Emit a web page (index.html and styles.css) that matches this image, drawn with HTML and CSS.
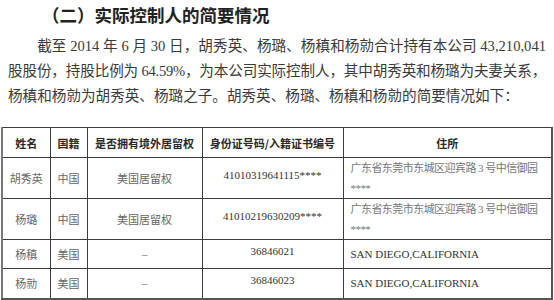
FILE: index.html
```html
<!DOCTYPE html>
<html lang="zh-CN">
<head>
<meta charset="utf-8">
<link rel="stylesheet" href="styles.css">
</head>
<body>
<div class="page">
  <h2 class="title">（二）实际控制人的简要情况</h2>
  <div class="para">
    <div class="line first">截至 2014 年 6 月 30 日，胡秀英、杨璐、杨稹和杨勍合计持有本公司 43,210,041</div>
    <div class="line tight">股股份，持股比例为 64.59%，为本公司实际控制人，其中胡秀英和杨璐为夫妻关系，</div>
    <div class="line last">杨稹和杨勍为胡秀英、杨璐之子。胡秀英、杨璐、杨稹和杨勍的简要情况如下：</div>
  </div>
  <table class="info">
    <colgroup>
      <col class="c1"><col class="c2"><col class="c3"><col class="c4"><col class="c5">
    </colgroup>
    <thead>
      <tr class="r-head">
        <th>姓名</th><th>国籍</th><th>是否拥有境外居留权</th><th>身份证号码/入籍证书编号</th><th>住所</th>
      </tr>
    </thead>
    <tbody>
      <tr class="r-tall">
        <td class="muted">胡秀英</td><td class="muted">中国</td><td class="muted">美国居留权</td>
        <td class="id">41010319641115****</td>
        <td class="addr">广东省东莞市东城区迎宾路 3 号中信御园<br>****</td>
      </tr>
      <tr class="r-tall2">
        <td class="muted">杨璐</td><td class="muted">中国</td><td class="muted">美国居留权</td>
        <td class="id">41010219630209****</td>
        <td class="addr">广东省东莞市东城区迎宾路 3 号中信御园<br>****</td>
      </tr>
      <tr class="r-short">
        <td class="muted">杨稹</td><td class="muted">美国</td><td class="muted">–</td>
        <td class="id">36846021</td>
        <td class="addr en">SAN DIEGO,CALIFORNIA</td>
      </tr>
      <tr class="r-short2">
        <td class="muted">杨勍</td><td class="muted">美国</td><td class="muted">–</td>
        <td class="id">36846023</td>
        <td class="addr en">SAN DIEGO,CALIFORNIA</td>
      </tr>
    </tbody>
  </table>
</div>
</body>
</html>
```

FILE: styles.css
```css
html, body {
  margin: 0;
  padding: 0;
  background: #ffffff;
}

.page {
  width: 554px;
  height: 300px;
  overflow: hidden;
}

.title {
  margin: 0;
  padding-left: 42px;
  height: 30px;
  line-height: 30px;
  font-family: "Noto Sans CJK SC", "Noto Sans", sans-serif;
  font-size: 17.5px;
  font-weight: 700;
  color: #222222;
}

.para {
  padding: 4px 0 0 8px;
  font-family: "Liberation Serif", "Noto Sans CJK SC", serif;
  font-size: 14.6px;
  color: #3a3a3a;
}

.line {
  width: 538px;
  height: 25px;
  line-height: 25px;
  white-space: nowrap;
}

.line.first,
.line.tight {
  text-align: justify;
  text-align-last: justify;
}

.line.first {
  text-indent: 2em;
  white-space: normal;
}

.line.tight {
  letter-spacing: -0.3px;
  white-space: normal;
}

.info {
  margin: 18px 0 0 1px;
  border-collapse: collapse;
  table-layout: fixed;
  width: 550px;
  font-family: "Liberation Serif", "Noto Sans CJK SC", serif;
  font-size: 11px;
  border-left: 2px solid #777777;
  border-right: 2px solid #555555;
  border-bottom: 2px solid #555555;
  border-top: 1px solid #333333;
}

.c1 { width: 48px; }
.c2 { width: 37px; }
.c3 { width: 115px; }
.c4 { width: 141px; }
.c5 { width: 209px; }

.info th,
.info td {
  border: 1px solid #3c3c3c;
  padding: 0;
  text-align: center;
  vertical-align: middle;
}

.info th {
  font-family: "Noto Sans CJK SC", "Noto Sans", sans-serif;
  font-weight: 700;
  color: #2a2a2a;
  font-size: 11px;
}

.r-head { height: 30px; }
.r-tall { height: 40px; }
.r-tall2 { height: 41px; }
.r-short { height: 29px; }
.r-short2 { height: 30px; }

.info td.muted {
  color: #666666;
}

.info td.id {
  color: #333333;
  padding-bottom: 6px;
}

.info td.addr {
  text-align: left;
  padding: 0 0 0 7px;
  line-height: 20px;
  white-space: nowrap;
  overflow: hidden;
  color: #777777;
  letter-spacing: -0.55px;
}

.info td.addr.en {
  color: #333333;
  letter-spacing: 0;
}
```
